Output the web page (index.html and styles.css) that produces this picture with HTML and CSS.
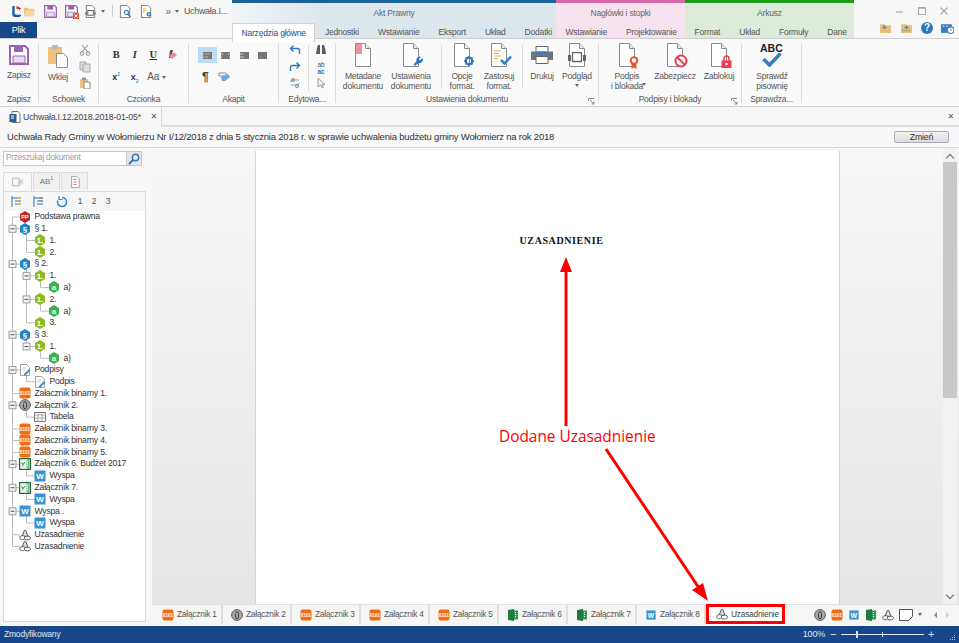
FILE: index.html
```html
<!DOCTYPE html>
<html lang="pl">
<head>
<meta charset="utf-8">
<title>Uchwała</title>
<link rel="stylesheet" href="styles.css">
</head>
<body>
<svg class="defs" width="0" height="0">
  <defs>
    <symbol id="s-save" viewBox="0 0 20 20"><path d="M1 1h15l3 3v15H1z" fill="#fff" stroke="#9b63b5" stroke-width="2"/><path d="M5 1h9v6H5z" fill="#9b63b5"/><path d="M4 11h12v7H4z" fill="#e9dcf0" stroke="#9b63b5"/></symbol>
    <symbol id="s-doc" viewBox="0 0 20 24"><path d="M2.500.5h10l5 5v18h-15z" fill="#fff" stroke="#8b8b8b"/><path d="M12.500.5v5h5" fill="#eee" stroke="#8b8b8b"/></symbol>
    <symbol id="s-folder" viewBox="0 0 14 12"><path d="M1 2h4l1 1h6v8H1z" fill="#edc27d"/><path d="M1 11l2-6h10l-2 6z" fill="#f4d59f"/></symbol>
    <symbol id="s-hex-pp" viewBox="0 0 12 12"><path d="M6 0l5 3v6l-5 3-5-3V3z" fill="#c9202f"/><text x="6" y="8.200" class="hex-t hex-s">PP</text></symbol>
    <symbol id="s-hex-par" viewBox="0 0 12 12"><path d="M6 0l5 3v6l-5 3-5-3V3z" fill="#1c86c8"/><text x="6" y="9" class="hex-t">§</text></symbol>
    <symbol id="s-hex-1" viewBox="0 0 12 12"><path d="M6 0l5 3v6l-5 3-5-3V3z" fill="#8dbd1d"/><text x="6" y="9" class="hex-t">1.</text></symbol>
    <symbol id="s-hex-a" viewBox="0 0 12 12"><path d="M6 0l5 3v6l-5 3-5-3V3z" fill="#37b34a"/><text x="6" y="9" class="hex-t">a</text></symbol>
    <symbol id="s-sign" viewBox="0 0 12 12"><path d="M1.500.5h6l3 3v8h-9z" fill="#fff" stroke="#8b8b8b" stroke-width=".8"/><path d="M3 4h4M3 6h3" stroke="#bbb" stroke-width=".7"/><path d="M5 10l5-5 1.500 1.500-5 5H5z" fill="#4a90d0"/></symbol>
    <symbol id="s-bin" viewBox="0 0 12 12"><rect x=".5" y=".5" width="11" height="11" rx="2" fill="#f36c12"/><text x="6" y="8" class="bin-t">0101</text></symbol>
    <symbol id="s-att" viewBox="0 0 12 12"><circle cx="6" cy="6" r="5.400" fill="#a8a8a8" stroke="#5e5e5e" stroke-width="1"/><path d="M4.500 4.300a1.500 1.500 0 0 1 3 0v3.800a1.500 1.500 0 0 1-3 0V5" fill="none" stroke="#333" stroke-width=".9"/></symbol>
    <symbol id="s-table" viewBox="0 0 12 12"><path d="M.5 1.500h11v9H.5z" fill="#fff" stroke="#777"/><path d="M.5 4h11M.5 7h11M4 1.500v9M8 1.500v9" stroke="#999" stroke-width=".8"/></symbol>
    <symbol id="s-xl" viewBox="0 0 12 12"><rect x=".6" y=".6" width="10.800" height="10.800" fill="#eef6ee" stroke="#1f6b36" stroke-width="1.200"/><path d="M7.500 1.200h3.300v9.600H7.500z" fill="#7fbb8f"/><path d="M8.500 3v6" stroke="#fff" stroke-dasharray="1 1"/><path d="M2.500 4.500l1.500 2 2-2.500" fill="none" stroke="#3f9a5c" stroke-width="1.100"/><path d="M2.500 8h3" stroke="#9cc9a8"/></symbol>
    <symbol id="s-word" viewBox="0 0 12 12"><rect x=".5" y=".5" width="11" height="11" fill="#3a93d2"/><text x="6" y="9" class="hex-t">W</text></symbol>
    <symbol id="s-uz" viewBox="0 0 12 12"><path d="M3 7.500 5.200 1.800c.4-.9 1.300-.9 1.700 0L9 7.500z" fill="#ddd" stroke="#444" stroke-width=".9"/><path d="M.8 8.500c0-1.200 1-1.800 2.400-1.800h1c1.300 0 2 .7 2 1.800 0 1.400-.9 2.200-2.700 2.200S.8 9.900.8 8.500z" fill="#fff" stroke="#444" stroke-width=".9"/><path d="M5.400 8.800c0-1 1-1.600 2.600-1.600h1.200c1.300 0 2.200.7 2.200 1.700 0 1.300-1 2-3 2s-3-.8-3-2.100z" fill="#fff" stroke="#444" stroke-width=".9"/></symbol>
    <symbol id="s-sheet" viewBox="0 0 12 12"><path d="M1 1l6-1v12l-6-1z" fill="#1f7a3c"/><path d="M7 1.500h4v9H7z" fill="#2f9a55"/><path d="M8.500 3v6" stroke="#fff" stroke-dasharray="1 1"/></symbol>
  </defs>
</svg>

<header class="titlebar">
  <div class="left-head">
    <div class="qat">
      <svg class="q q-logo" viewBox="0 0 13 14"><path d="M2 1v9a3 3 0 0 0 3 3h5l2-2.500H6a1.500 1.500 0 0 1-1.500-1.500V1z" fill="#155fa0"/><path d="M6.500 1l5 2.500L9.500 6 9 4.300 6.500 4z" fill="#d01f2f"/></svg>
      <svg class="q q-open"><use href="#s-folder"/></svg>
      <svg class="q q-save"><use href="#s-save"/></svg>
      <span class="q q-savex"><svg class="q-inner"><use href="#s-save"/></svg><svg class="mini-x" viewBox="0 0 6 6"><path d="M0 0h6v6H0z" fill="#e2553d"/><path d="M1.500 1.500l3 3m0-3l-3 3" stroke="#fff"/></svg></span>
      <svg class="q q-print" viewBox="0 0 14 14"><path d="M2.500.5h6l3 3v10h-9z" fill="#fff" stroke="#777"/><rect x="4" y="6" width="6" height="5" fill="none" stroke="#555"/><path d="M1 8h2v2H1zM11 8h2v2h-2z" fill="#777"/></svg>
      <span class="caret q-caret1"></span>
      <span class="q-sep"></span>
      <svg class="q q-dsearch" viewBox="0 0 14 14"><path d="M1.500.5h7l3 3v10h-10z" fill="#fff" stroke="#777"/><circle cx="8" cy="8" r="2.200" fill="none" stroke="#3779b6" stroke-width="1.200"/><path d="M9.500 10l3 3" stroke="#3779b6" stroke-width="1.500"/></svg>
      <svg class="q q-dgear" viewBox="0 0 14 14"><path d="M1.500.5h7l3 3v10h-10z" fill="#fff" stroke="#777"/><path d="M3 4h3M3 6h4M3 8h2" stroke="#e0a948"/><circle cx="9.500" cy="10" r="2.500" fill="#3d82bd"/><circle cx="9.500" cy="10" r=".9" fill="#fff"/></svg>
      <span class="q-more">»</span>
      <span class="caret q-caret2"></span>
      <span class="q-title">Uchwała.I...</span>
    </div>
    <div class="file-row"><div class="file-tab">Plik</div></div>
  </div>

  <div class="ctx ctx-blue">
    <div class="ctx-name">Akt Prawny</div>
    <div class="ctx-tabs">
      <span class="rtab rtab-active">Narzędzia główne</span>
      <span class="rtab">Jednostki</span><span class="rtab">Wstawianie</span><span class="rtab">Eksport</span><span class="rtab">Układ</span><span class="rtab">Dodatki</span>
    </div>
  </div>
  <div class="ctx ctx-pink">
    <div class="ctx-name">Nagłówki i stopki</div>
    <div class="ctx-tabs"><span class="rtab">Wstawianie</span><span class="rtab">Projektowanie</span></div>
  </div>
  <div class="ctx ctx-green">
    <div class="ctx-name">Arkusz</div>
    <div class="ctx-tabs"><span class="rtab">Format</span><span class="rtab">Układ</span><span class="rtab">Formuły</span><span class="rtab">Dane</span></div>
  </div>

  <div class="winside">
    <div class="winctl">
      <svg class="wc" viewBox="0 0 10 10"><path d="M1 6h7" stroke="#aaa" stroke-width="1.200"/></svg>
      <svg class="wc" viewBox="0 0 10 10"><path d="M1.500 1.500h7v7h-7z" fill="none" stroke="#aaa"/><path d="M1.500 2h7" stroke="#aaa" stroke-width="1.500"/></svg>
      <svg class="wc" viewBox="0 0 10 10"><path d="M1.500 1.500l7 7m0-7l-7 7" stroke="#aaa" stroke-width="1.200"/></svg>
    </div>
    <div class="winhelp">
      <svg class="wh" viewBox="0 0 12 11"><path d="M1 2h4l1 1h5v7H1z" fill="#e8bd7b"/><path d="M7 5H4l1.500-2M4 5l1.500 1.500" stroke="#5a7fa5" fill="none"/></svg>
      <svg class="wh" viewBox="0 0 12 11"><path d="M1 2h4l1 1h5v7H1z" fill="#e8bd7b"/><path d="M4 5h3L5.500 3M7 5 5.500 6.500" stroke="#5a7fa5" fill="none"/><path d="M2 8h8" stroke="#777" stroke-dasharray="1 1"/></svg>
      <span class="help">?</span>
      <svg class="wh" viewBox="0 0 12 11"><path d="M0 2h10v8H0z" fill="#3a7fbe"/><circle cx="9" cy="7.500" r="3" fill="#fff" stroke="#3a7fbe"/><path d="M9 6v1.500h1.200" stroke="#3a7fbe" fill="none" stroke-width=".7"/><path d="M2 4h1M5 4h1" stroke="#fff"/></svg>
    </div>
  </div>
</header>

<section class="ribbon">
  <div class="group g-zapisz">
    <div class="g-body">
      <div class="big w38"><svg class="ic-save"><use href="#s-save"/></svg><span class="big-t">Zapisz</span></div>
    </div>
    <div class="g-label">Zapisz</div>
  </div>
  <div class="group g-schowek">
    <div class="g-body">
      <div class="big w38 nudge-wklej">
        <svg class="ic-paste" viewBox="0 0 22 24"><path d="M1 3h14v17H1z" fill="#ecc27c"/><path d="M5 1h6v4H5z" fill="#b9b9b9"/><path d="M9.500 9.500h7l4 4v10h-11z" fill="#fff" stroke="#8b8b8b"/></svg>
        <span class="big-t">Wklej</span>
      </div>
      <div class="stack stack-clip">
        <svg class="st" viewBox="0 0 12 12"><path d="M3 1l6 7M9 1 3 8" stroke="#999" stroke-width="1.100"/><circle cx="3" cy="9.500" r="1.800" fill="none" stroke="#888"/><circle cx="9" cy="9.500" r="1.800" fill="none" stroke="#888"/></svg>
        <svg class="st" viewBox="0 0 12 12"><path d="M1 1h6v8H1z" fill="#ddd" stroke="#aaa"/><path d="M4 3h7v8H4z" fill="#ddd" stroke="#aaa"/></svg>
        <svg class="st" viewBox="0 0 12 12"><path d="M1 2h8v9H1z" fill="#ecc27c"/><path d="M3 .5h4v3H3z" fill="#999"/><path d="M5 5h6v7H5z" fill="#fff" stroke="#8b8b8b"/></svg>
      </div>
    </div>
    <div class="g-label">Schowek</div>
  </div>
  <div class="group g-czcionka">
    <div class="g-body g-grid">
      <div class="tool-row">
        <span class="tool t-b">B</span><span class="tool t-i">I</span><span class="tool t-u">U</span>
        <svg class="tool-svg" viewBox="0 0 12 12"><path d="M4 1h3l-2 8H3z" fill="#555"/><path d="M6 10 3 7l5-4 3 3z" fill="#ee8e99"/></svg>
      </div>
      <div class="tool-row">
        <span class="tool t-sm">x<sup class="sup">2</sup></span><span class="tool t-sm">x<sub class="sub">2</sub></span><span class="tool t-aa">Aa</span><span class="caret caret-aa"></span>
      </div>
    </div>
    <div class="g-label">Czcionka</div>
  </div>
  <div class="group g-akapit">
    <div class="g-body g-grid">
      <div class="tool-row tool-row-ak">
        <span class="al al-on"><svg class="al-i" viewBox="0 0 9 7"><path d="M0 0h9v7H0z" fill="#777"/><path d="M0 2h7M0 5h5" stroke="#ddd" stroke-width=".6"/></svg></span>
        <span class="al"><svg class="al-i" viewBox="0 0 9 7"><path d="M0 0h9v7H0z" fill="#777"/><path d="M0 2h2M7 2h2M0 5h1M8 5h1" stroke="#fff" stroke-width=".6"/></svg></span>
        <span class="al"><svg class="al-i" viewBox="0 0 9 7"><path d="M0 0h9v7H0z" fill="#777"/><path d="M0 2h3M0 5h4" stroke="#fff" stroke-width=".6"/></svg></span>
        <span class="al"><svg class="al-i" viewBox="0 0 9 7"><path d="M0 0h9v7H0z" fill="#777"/></svg></span>
      </div>
      <div class="tool-row tool-row-ak2">
        <span class="tool t-pil">¶</span>
        <svg class="tool-svg" viewBox="0 0 12 10"><path d="M1 1h7v3H1z" fill="none" stroke="#888"/><path d="M4 9 3 5l7-3 2 3-5 4z" fill="#69a9dd"/></svg>
      </div>
    </div>
    <div class="g-label">Akapit</div>
  </div>
  <div class="group g-edyt">
    <div class="g-body g-edyt-body">
      <div class="stack stack-ed">
        <svg class="st" viewBox="0 0 12 12"><path d="M10.500 10V6.500a2 2 0 0 0-2-2H2M4.500 1.500l-3 3 3 3" fill="none" stroke="#2e78bd" stroke-width="1.400"/></svg>
        <svg class="st" viewBox="0 0 12 12"><path d="M1.500 10V6.500a2 2 0 0 1 2-2H10M7.500 1.500l3 3-3 3" fill="none" stroke="#2e78bd" stroke-width="1.400"/></svg>
        <svg class="st" viewBox="0 0 12 12"><path d="M10 3H3L1.500 5M2 8h7l1.500-2" fill="none" stroke="#7fa9d0" stroke-width="1.200"/><circle cx="4" cy="3" r="1.500" fill="none" stroke="#888"/><circle cx="8" cy="9" r="1.500" fill="none" stroke="#888"/></svg>
      </div>
      <span class="vsep vsep-ed"></span>
      <div class="stack stack-ed2">
        <svg class="st" viewBox="0 0 12 12"><path d="M1 10l1-6 1-3h2v9zM7 10V1h2l1 3 1 6z" fill="#5c5c5c"/></svg>
        <span class="abac"><span class="abac-a">ab</span><span class="abac-b">ac</span></span>
        <svg class="st" viewBox="0 0 12 12"><path d="M3 1v9l2.500-2 1.500 3 1.500-.8L7 7.500h3z" fill="#eef1f5" stroke="#9a9a9a"/></svg>
      </div>
    </div>
    <div class="g-label">Edytowa...</div>
  </div>
  <div class="group g-ustaw">
    <div class="g-body">
      <div class="big w48">
        <span class="ic-doc"><svg class="ic-doc-s"><use href="#s-doc"/></svg><svg class="ov ov-bm" viewBox="0 0 6 10"><path d="M0 0h6v10H0z" fill="#ef8fa0"/></svg></span>
        <span class="big-t">Metadane<br>dokumentu</span>
      </div>
      <div class="big w48">
        <span class="ic-doc"><svg class="ic-doc-s"><use href="#s-doc"/></svg><svg class="ov ov-br" viewBox="0 0 10 10"><path d="M9.500 2 7 4.500 5.500 3 8 .7A3.500 3.500 0 0 0 3.500 5L.5 8.500 2 10l3.500-3A3.500 3.500 0 0 0 9.500 2z" fill="#2a76b8"/></svg></span>
        <span class="big-t">Ustawienia<br>dokumentu</span>
      </div>
      <span class="vsep vsep-1"></span>
      <div class="big w40">
        <span class="ic-doc"><svg class="ic-doc-s"><use href="#s-doc"/></svg><svg class="ov ov-br" viewBox="0 0 10 10"><circle cx="5" cy="5" r="3.300" fill="none" stroke="#2a76b8" stroke-width="2.200"/><path d="M5 0v2M5 8v2M0 5h2M8 5h2M1.500 1.500l1.500 1.500M7 7l1.500 1.500M1.500 8.500 3 7M7 3l1.500-1.500" stroke="#2a76b8" stroke-width="1.500"/></svg></span>
        <span class="big-t">Opcje<br>format.</span>
      </div>
      <div class="big w34">
        <span class="ic-doc"><svg class="ic-doc-s"><use href="#s-doc"/></svg><svg class="ov ov-lines" viewBox="0 0 10 10"><path d="M0 1h7M0 3.500h5M0 6h7M0 8.500h4" stroke="#e6ad4b"/></svg><svg class="ov ov-chk" viewBox="0 0 12 10"><path d="M1 5l3.500 3.500L11 1.500" fill="none" stroke="#3a7fbe" stroke-width="2.500"/></svg></span>
        <span class="big-t">Zastosuj<br>format.</span>
      </div>
      <span class="vsep vsep-2"></span>
      <div class="big w32">
        <svg class="ic-print" viewBox="0 0 22 18"><path d="M5 .5h12v6H5z" fill="#fff" stroke="#666"/><path d="M0 5.500h22V14H0z" fill="#6d7681"/><path d="M6 5.500h10v1.800H6z" fill="#2a82cc"/><path d="M5 10.500h12v7H5z" fill="#fff" stroke="#666"/></svg>
        <span class="big-t">Drukuj</span>
      </div>
      <div class="big w38">
        <span class="ic-doc"><svg class="ic-doc-s"><use href="#s-doc"/></svg><svg class="ov ov-pv" viewBox="0 0 18 12"><path d="M4.500.5h9v9h-9z" fill="#fff" stroke="#666" stroke-width="1.300"/><path d="M0 3h3v6H0zM15 3h3v6h-3z" fill="#666"/></svg></span>
        <span class="big-t">Podgląd<br><span class="caret caret-big"></span></span>
      </div>
    </div>
    <div class="g-label">Ustawienia dokumentu</div>
    <svg class="launcher" viewBox="0 0 7 7"><path d="M.5 3V.5H6M2 2l4 4M6 3.500V6H3.500" fill="none" stroke="#888"/></svg>
  </div>
  <div class="group g-podpisy">
    <div class="g-body">
      <div class="big w52 caret-side">
        <span class="ic-doc"><svg class="ic-doc-s"><use href="#s-doc"/></svg><svg class="ov ov-seal" viewBox="0 0 10 13"><circle cx="5" cy="4.500" r="3.300" fill="#fff" stroke="#e4572e" stroke-width="2"/><path d="M2.500 7v6l2.500-1.500L7.500 13V7z" fill="#e4572e"/></svg></span>
        <span class="big-t">Podpis<br>i blokada</span>
        <span class="caret caret-podpis"></span>
      </div>
      <div class="big w44">
        <span class="ic-doc"><svg class="ic-doc-s"><use href="#s-doc"/></svg><svg class="ov ov-no" viewBox="0 0 14 14"><circle cx="7" cy="7" r="5.500" fill="#fff" stroke="#ef3b4f" stroke-width="2"/><path d="M3 3l8 8" stroke="#ef3b4f" stroke-width="2"/></svg></span>
        <span class="big-t">Zabezpiecz</span>
      </div>
      <div class="big w44">
        <span class="ic-doc"><svg class="ic-doc-s"><use href="#s-doc"/></svg><svg class="ov ov-lock" viewBox="0 0 11 13"><path d="M3 6V3.500a2.500 2.500 0 0 1 5 0V6" fill="none" stroke="#ef3b4f" stroke-width="1.500"/><path d="M.5 5.500h10V13H.5z" fill="#ef3b4f"/><circle cx="5.500" cy="9" r="1.300" fill="#fff"/></svg></span>
        <span class="big-t">Zablokuj</span>
      </div>
    </div>
    <div class="g-label">Podpisy i blokady</div>
    <svg class="launcher" viewBox="0 0 7 7"><path d="M.5 3V.5H6M2 2l4 4M6 3.500V6H3.500" fill="none" stroke="#888"/></svg>
  </div>
  <div class="group g-spraw">
    <div class="g-body">
      <div class="big w60">
        <span class="ic-abc"><span class="abc">ABC</span><svg class="abc-chk" viewBox="0 0 20 15"><path d="M1.500 7l6 6L18.500 1.500" fill="none" stroke="#3a7fbe" stroke-width="3.600"/></svg></span>
        <span class="big-t">Sprawdź<br>pisownię</span>
      </div>
    </div>
    <div class="g-label">Sprawdza...</div>
  </div>
</section>

<div class="doctabs">
  <div class="doctab">
    <svg class="doctab-i" viewBox="0 0 12 12"><path d="M3 .5h6l2 2v9H3z" fill="#fff" stroke="#777"/><path d="M.5 3h7v8h-7z" fill="#2c5d9f"/><path d="M2 5h3M2 7h3" stroke="#fff"/></svg>
    <span class="doctab-t">Uchwała.I.12.2018.2018-01-05*</span>
    <span class="x">✕</span>
  </div>
  <span class="x x-right">✕</span>
</div>

<div class="docinfo">
  <span class="docinfo-t">Uchwała Rady Gminy w Wołomierzu Nr I/12/2018 z dnia 5 stycznia 2018 r. w sprawie uchwalenia budżetu gminy Wołomierz na rok 2018</span>
  <span class="btn-change">Zmień</span>
</div>

<div class="workspace">
  <aside class="side">
    <div class="search">
      <span class="search-input">Przeszukaj dokument</span>
      <span class="search-btn"><svg class="search-i" viewBox="0 0 12 12"><circle cx="7.500" cy="4.500" r="3.200" fill="#dcecf8" stroke="#2a76b8" stroke-width="1.400"/><path d="M5 7l-4 4" stroke="#2a76b8" stroke-width="1.800"/></svg></span>
    </div>
    <div class="ptabs">
      <span class="ptab ptab-on"><svg class="ptab-i" viewBox="0 0 14 12"><path d="M.5 1.500h8v9h-8z" fill="#f5f5f5" stroke="#aaa"/><path d="M9 3h4v6H9z" fill="#ddd"/><path d="M8 4l2.500 2L8 8" fill="#bbb"/></svg></span>
      <span class="ptab"><span class="ab">AB<sup class="ab-s">1</sup></span></span>
      <span class="ptab"><svg class="ptab-i" viewBox="0 0 14 14"><path d="M3 .5h6l3 3v10H3z" fill="#fff" stroke="#999"/><path d="M5 4h4M5 7h4M5 10h4" stroke="#d06070"/></svg></span>
    </div>
    <div class="panel">
      <div class="ptools">
        <svg class="pt pt1" viewBox="0 0 11 11"><path d="M1 0v11M1 2h9M4 5h6M4 8h6" stroke="#2a76b8"/><path d="M6 1h4v2H6zM6 7h4v2H6z" fill="#e8b64c"/></svg>
        <svg class="pt pt2" viewBox="0 0 11 11"><path d="M1 0v11M1 2h9M4 5h6M4 8h6" stroke="#2a76b8"/><path d="M6 1h4v2H6zM6 4h4v2H6z" fill="#999"/></svg>
        <svg class="pt pt3" viewBox="0 0 12 12"><path d="M6 1.500A4.500 4.500 0 1 1 1.800 4.500" fill="none" stroke="#2a82cc" stroke-width="1.500"/><path d="M3 0v3.500h3.500" fill="none" stroke="#2a82cc" stroke-width="1.200"/></svg>
        <span class="pn pn1">1</span><span class="pn">2</span><span class="pn">3</span>
      </div>
      <div class="tree">
        <svg class="tree-lines" viewBox="0 0 142 400">
          <path class="tl" d="M8.500 6V335.600M8.500 6H16M8.500 182.600H16M8.500 217.900H16M8.500 229.600H16M8.500 241.400H16M8.500 323.800H16M8.500 335.600H16
            M8.500 17.800H16M8.500 53.100H16M8.500 123.700H16M8.500 159H16M8.500 194.300H16M8.500 253.200H16M8.500 276.700H16M8.500 300.300H16
            M22.500 17.800V41.300M22.500 29.500H31M22.500 41.300H31
            M22.500 53.100V111.900M22.500 64.900H31M22.500 88.400H31M22.500 111.900H31
            M36.500 64.900V76.600H46M36.500 88.400V100.200H46
            M22.500 123.700V135.500H31M36.500 135.500V147.200H46
            M22.500 159V170.800H31M22.500 194.300V206.100H31M22.500 253.200V264.900H31M22.500 276.700V288.500H31M22.500 300.300V312H31"/>
          <g class="exp">
            <path d="M5 14.300h7v7H5zM5 49.600h7v7H5zM5 120.200h7v7H5zM5 155.500h7v7H5zM5 190.800h7v7H5zM5 249.700h7v7H5zM5 273.200h7v7H5zM5 296.800h7v7H5zM19 61.400h7v7h-7zM19 84.900h7v7h-7zM19 132h7v7h-7z"/>
          </g>
          <path class="exp-m" d="M6.500 17.800h4M6.500 53.100h4M6.500 123.700h4M6.500 159h4M6.500 194.300h4M6.500 253.200h4M6.500 276.700h4M6.500 300.300h4M20.500 64.900h4M20.500 88.400h4M20.500 135.500h4"/>
        </svg>
        <div class="row l0"><svg class="ti"><use href="#s-hex-pp"/></svg>Podstawa prawna</div>
        <div class="row l0"><svg class="ti"><use href="#s-hex-par"/></svg>§ 1.</div>
        <div class="row l1"><svg class="ti"><use href="#s-hex-1"/></svg>1.</div>
        <div class="row l1"><svg class="ti"><use href="#s-hex-1"/></svg>2.</div>
        <div class="row l0"><svg class="ti"><use href="#s-hex-par"/></svg>§ 2.</div>
        <div class="row l1"><svg class="ti"><use href="#s-hex-1"/></svg>1.</div>
        <div class="row l2"><svg class="ti"><use href="#s-hex-a"/></svg>a)</div>
        <div class="row l1"><svg class="ti"><use href="#s-hex-1"/></svg>2.</div>
        <div class="row l2"><svg class="ti"><use href="#s-hex-a"/></svg>a)</div>
        <div class="row l1"><svg class="ti"><use href="#s-hex-1"/></svg>3.</div>
        <div class="row l0"><svg class="ti"><use href="#s-hex-par"/></svg>§ 3.</div>
        <div class="row l1"><svg class="ti"><use href="#s-hex-1"/></svg>1.</div>
        <div class="row l2"><svg class="ti"><use href="#s-hex-a"/></svg>a)</div>
        <div class="row l0"><svg class="ti"><use href="#s-sign"/></svg>Podpisy</div>
        <div class="row l1"><svg class="ti"><use href="#s-sign"/></svg>Podpis</div>
        <div class="row l0"><svg class="ti"><use href="#s-bin"/></svg>Załacznik binarny 1.</div>
        <div class="row l0"><svg class="ti"><use href="#s-att"/></svg>Załącznik 2.</div>
        <div class="row l1"><svg class="ti"><use href="#s-table"/></svg>Tabela</div>
        <div class="row l0"><svg class="ti"><use href="#s-bin"/></svg>Załacznik binarny 3.</div>
        <div class="row l0"><svg class="ti"><use href="#s-bin"/></svg>Załacznik binarny 4.</div>
        <div class="row l0"><svg class="ti"><use href="#s-bin"/></svg>Załacznik binarny 5.</div>
        <div class="row l0"><svg class="ti"><use href="#s-xl"/></svg>Załącznik 6. Budżet 2017</div>
        <div class="row l1"><svg class="ti"><use href="#s-word"/></svg>Wyspa</div>
        <div class="row l0"><svg class="ti"><use href="#s-xl"/></svg>Załącznik 7.</div>
        <div class="row l1"><svg class="ti"><use href="#s-word"/></svg>Wyspa</div>
        <div class="row l0"><svg class="ti"><use href="#s-word"/></svg>Wyspa .</div>
        <div class="row l1"><svg class="ti"><use href="#s-word"/></svg>Wyspa</div>
        <div class="row l0"><svg class="ti"><use href="#s-uz"/></svg>Uzasadnienie</div>
        <div class="row l0"><svg class="ti"><use href="#s-uz"/></svg>Uzasadnienie</div>
      </div>
    </div>
  </aside>

  <main class="main">
    <div class="doc-area">
      <div class="canvas">
        <div class="page"><h1 class="page-h">UZASADNIENIE</h1></div>
      </div>
      <div class="vscroll">
        <span class="chev chev-up"></span>
        <span class="thumb"></span>
        <span class="chev chev-down"></span>
      </div>
    </div>
    <div class="sheets">
      <span class="sheet"><svg class="si"><use href="#s-bin"/></svg>Załącznik 1</span>
      <span class="sheet"><svg class="si"><use href="#s-att"/></svg>Załącznik 2</span>
      <span class="sheet"><svg class="si"><use href="#s-bin"/></svg>Załącznik 3</span>
      <span class="sheet"><svg class="si"><use href="#s-bin"/></svg>Załącznik 4</span>
      <span class="sheet"><svg class="si"><use href="#s-bin"/></svg>Załącznik 5</span>
      <span class="sheet"><svg class="si"><use href="#s-sheet"/></svg>Załącznik 6</span>
      <span class="sheet"><svg class="si"><use href="#s-sheet"/></svg>Załącznik 7</span>
      <span class="sheet"><svg class="si si-w"><use href="#s-word"/></svg>Załącznik 8</span>
      <span class="sheet sheet-on"><svg class="si"><use href="#s-uz"/></svg>Uzasadnienie</span>
      <div class="sheet-tools">
        <svg class="si"><use href="#s-att"/></svg>
        <svg class="si"><use href="#s-bin"/></svg>
        <svg class="si si-w"><use href="#s-word"/></svg>
        <svg class="si"><use href="#s-sheet"/></svg>
        <svg class="si"><use href="#s-uz"/></svg>
        <svg class="si si-note" viewBox="0 0 14 12"><path d="M.5.500h13v7l-4 4h-9z" fill="#fff" stroke="#555"/></svg>
        <span class="caret caret-s"></span>
        <span class="tri tri-l"></span>
        <span class="tri tri-r"></span>
      </div>
    </div>
  </main>
</div>

<footer class="status">
  <span class="status-t">Zmodyfikowany</span>
  <div class="zoom">
    <span class="zoom-v">100%</span>
    <span class="zoom-b">−</span>
    <span class="slider"><span class="slider-thumb"></span><span class="slider-tick"></span></span>
    <span class="zoom-b">+</span>
    <svg class="grip" viewBox="0 0 6 6"><path d="M4 0h1v1H4zM2 2h1v1H2zM4 2h1v1H4zM0 4h1v1H0zM2 4h1v1H2zM4 4h1v1H4z" fill="#a9c1de"/></svg>
  </div>
</footer>

<div class="annot-label">Dodane Uzasadnienie</div>
<svg class="annot" viewBox="0 0 959 643">
  <path d="M566 426V268" stroke="#ff0000" stroke-width="3"/>
  <path d="M566 257l-6 15h12z" fill="#ff0000"/>
  <path d="M606 449 699 588" stroke="#ff0000" stroke-width="3"/>
  <path d="M708 601 692 590 703 583z" fill="#ff0000"/>
</svg>
</body>
</html>
```

FILE: styles.css
```css
* { box-sizing: border-box; }
html, body { margin: 0; padding: 0; }
body {
  width: 959px; height: 643px; overflow: hidden; position: relative;
  display: flex; flex-direction: column;
  font: 8.500px/11px "Liberation Sans", Arial, sans-serif; letter-spacing: -.2px; color: #444; background: #f5f5f5;
}
svg { display: block; flex: none; }
.defs { position: absolute; }
.hex-t { font: bold 8px "Liberation Sans", sans-serif; fill: #fff; text-anchor: middle; letter-spacing: 0; }
.hex-s { font-size: 5.500px; }
.bin-t { font: bold 4.500px "Liberation Sans", sans-serif; fill: #fff; text-anchor: middle; letter-spacing: 0; }

/* title bar */
.titlebar { display: flex; height: 39px; flex: none; background: #f7f7f7; border-bottom: 1px solid #cfcfcf; }
.left-head { width: 232px; flex: none; display: flex; flex-direction: column; }
.qat { height: 23px; display: flex; align-items: center; padding-left: 10px; }
.q { width: 13px; height: 13px; flex: none; }
.q-open { margin-right: 7.500px; }
.q-save { margin-right: 8px; }
.q-savex { position: relative; margin-right: 6px; }
.q-inner { width: 13px; height: 13px; }
.mini-x { position: absolute; right: -1px; bottom: -1px; width: 6px; height: 6px; }
.q-print { margin-right: 4.500px; }
.caret { display: inline-block; width: 0; height: 0; border: 2px solid transparent; border-top: 3px solid #666; border-bottom: 0; flex: none; }
.q-caret1 { margin-right: 7px; }
.q-sep { width: 1px; height: 12px; background: #ccc; margin-right: 5.500px; }
.q-dsearch { margin-right: 8px; }
.q-dgear { margin-right: 13px; }
.q-more { font-size: 10px; margin-right: 4px; color: #666; }
.q-caret2 { margin-right: 5px; }
.q-title { white-space: nowrap; color: #555; font-size: 8.800px; }
.file-row { flex: 1; display: flex; }
.file-tab { width: 37px; background: #17488a; color: #fff; text-align: center; line-height: 16px; font-size: 9px; }

.ctx { display: flex; flex-direction: column; border-top: 3px solid; flex: none; }
.ctx-name { height: 20px; line-height: 21px; text-align: center; color: #666; }
.ctx-tabs { flex: 1; display: flex; }
.ctx-blue { width: 324px; border-color: #1a6495; background: linear-gradient(90deg, #f0f4f7, #dce6ed 30%); }
.ctx-pink { width: 129px; border-color: #d66aa9; background: #f7e3ef; }
.ctx-green { width: 169px; border-color: #1b9a1c; background: #dcecd9; }
.rtab { padding: 0 9.500px; line-height: 18px; color: #555; white-space: nowrap; }
.rtab-active { background: #fff; color: #1d4f91; border: 1px solid #d4d4d4; border-bottom: 0; padding: 0 8.500px; margin-bottom: -1px; position: relative; }

.winside { flex: 1; display: flex; flex-direction: column; background: #f7f7f7; }
.winctl { height: 22px; display: flex; justify-content: flex-end; align-items: center; gap: 12px; padding-right: 10px; }
.wc { width: 10px; height: 10px; }
.winhelp { display: flex; justify-content: flex-end; align-items: center; gap: 8px; padding-right: 5px; }
.wh { width: 13px; height: 12px; }
.help { width: 12px; height: 12px; border-radius: 50%; background: #2a76b8; color: #fff; font: bold 10px/12px "Liberation Sans", sans-serif; text-align: center; }

/* ribbon */
.ribbon { height: 68px; flex: none; display: flex; background: #fafafa; padding: 4px 0 3px; border-bottom: 1px solid #cfcfcf; }
.group { display: flex; flex-direction: column; border-right: 1px solid #dcdcdc; position: relative; flex: none; }
.g-zapisz { width: 39px; }
.g-schowek { width: 60px; }
.g-czcionka { width: 90px; }
.g-akapit { width: 90px; }
.g-edyt { width: 57px; }
.g-ustaw { width: 263px; }
.g-podpisy { width: 143px; }
.g-spraw { width: 60px; }
.g-body { flex: 1; display: flex; min-height: 0; }
.g-label { height: 12px; line-height: 11px; margin-bottom: -3px; text-align: center; color: #555; white-space: nowrap; }
.big { display: flex; flex-direction: column; align-items: center; flex: none; position: relative; }
.big-t { margin-top: 4px; text-align: center; line-height: 10px; white-space: nowrap; color: #555; display: block; }
.w32 { width: 32px; } .w34 { width: 34px; } .w38 { width: 38px; } .w40 { width: 40px; }
.w44 { width: 44px; } .w48 { width: 48px; } .w52 { width: 52px; } .w60 { width: 60px; }
.ic-save { width: 20px; height: 20px; margin-top: 2px; margin-bottom: 1px; }
.ic-paste { width: 22px; height: 24px; }
.ic-doc { position: relative; width: 20px; height: 24px; display: block; flex: none; }
.ic-doc-s { width: 20px; height: 24px; }
.ov { position: absolute; }
.ov-bm { left: 3px; top: 1px; width: 6px; height: 10px; }
.ov-br { right: -2px; bottom: 1px; width: 10px; height: 10px; }
.ov-lines { left: 5px; top: 7px; width: 10px; height: 10px; }
.ov-chk { right: -3px; bottom: 2px; width: 12px; height: 10px; }
.ov-pv { left: 1px; top: 9px; width: 18px; height: 12px; }
.ov-seal { right: -2px; bottom: -2px; width: 10px; height: 13px; }
.ov-no { right: -3px; bottom: -1px; width: 14px; height: 14px; }
.ov-lock { right: -3px; bottom: -1px; width: 11px; height: 13px; }
.ic-print { width: 22px; height: 18px; margin: 3px 0 3px; }
.caret-big { vertical-align: 2px; }
.caret-podpis { position: absolute; right: 7px; top: 40px; }
.launcher { position: absolute; right: 3px; bottom: -2px; width: 7px; height: 7px; }

.nudge-wklej { padding-top: 1px; }
.stack { display: flex; flex-direction: column; align-items: center; }
.st { width: 12px; height: 12px; margin-bottom: 4.500px; }
.stack-clip { width: 16px; padding-top: 1px; }
.g-grid { flex-direction: column; }
.tool-row { display: flex; align-items: center; height: 16px; padding-left: 8px; margin-top: 4px; }
.tool-row + .tool-row { margin-top: 6px; }
.tool { width: 18.500px; text-align: center; color: #333; font: bold 10px/12px "Liberation Serif", serif; letter-spacing: 0; }
.t-b { font: bold 10.500px/12px "Liberation Serif", serif; }
.t-i { font: italic bold 10.500px/12px "Liberation Serif", serif; }
.t-u { font: bold 10.500px/12px "Liberation Serif", serif; text-decoration: underline; }
.t-sm { font: bold 9px/12px "Liberation Sans", sans-serif; }
.t-aa { font: 10px/12px "Liberation Sans", sans-serif; color: #555; }
.caret-aa { margin-left: -1px; }
.sup, .sub { font-size: 5px; color: #4a90d0; line-height: 0; }
.tool-svg { width: 12px; height: 12px; margin-left: 3px; }
.tool-row-ak { padding-left: 9px; }
.al { width: 18.500px; height: 16px; display: flex; align-items: center; justify-content: center; flex: none; }
.al-on { background: #bddcf3; }
.al-i { width: 9px; height: 7px; }
.tool-row-ak2 { padding-left: 7px; }
.t-pil { font: bold 12px/12px "Liberation Sans", sans-serif; color: #444; }
.g-edyt-body { align-items: flex-start; }
.stack-ed { width: 29px; padding: 1px 0 0 3px; }
.stack-ed2 { width: 24px; padding-top: 1px; }
.vsep-ed { height: 46px; margin-top: 2px; }
.vsep { width: 1px; background: #dcdcdc; flex: none; }
.abac { display: flex; flex-direction: column; align-items: center; width: 14px; height: 14px; margin-bottom: 2.500px; font-size: 6.500px; line-height: 7px; letter-spacing: 0; color: #555; }
.abac-b { color: #2a76b8; font-weight: bold; }
.g-ustaw .g-body { padding-left: 3px; }
.vsep-1 { height: 44px; margin: 2px 0 0 6px; }
.vsep-2 { height: 44px; margin: 2px 3px 0 6px; }
.g-podpisy .g-body { padding-left: 2px; }
.ic-abc { position: relative; width: 22px; height: 24px; display: block; flex: none; }
.abc { position: absolute; left: -1px; top: -1px; font: bold 10.500px/12px "Liberation Sans", sans-serif; letter-spacing: 0; color: #222; }
.abc-chk { position: absolute; left: 1px; top: 9px; width: 20px; height: 15px; }

/* document tabs */
.doctabs { height: 20px; flex: none; display: flex; justify-content: space-between; align-items: flex-end; background: #f5f5f5; border-bottom: 2px solid #dcdcdc; padding-top: 1px; }
.doctab { width: 162px; height: 20px; margin-bottom: -2px; background: #f8f8f8; border: 1px solid #d5d5d5; border-width: 0 1px 0 0; display: flex; align-items: center; padding-left: 9px; }
.doctab-i { width: 12px; height: 12px; margin-right: 2px; }
.doctab-t { white-space: nowrap; color: #444; font-size: 8.800px; }
.x { font: 8px/10px "DejaVu Sans", sans-serif; color: #555; }
.doctab .x { margin-left: auto; margin-right: 4px; }
.x-right { margin-right: 5px; margin-bottom: 3px; }
.docinfo { height: 21px; flex: none; display: flex; justify-content: space-between; align-items: center; background: #f8f8f8; padding: 0 10px 1px 7px; border-bottom: 1px solid #d8d8d8; }
.docinfo-t { white-space: nowrap; color: #333; font-size: 9.500px; }
.btn-change { width: 55px; height: 12px; border: 1px solid #aab; border-radius: 2px; background: linear-gradient(#f2f2f4, #dcdde2); text-align: center; line-height: 10px; color: #333; font-size: 8.800px; }

/* workspace */
.workspace { height: 476px; flex: none; display: flex; }
.side { width: 152px; flex: none; background: #f7f7f7; padding: 3px 6px 2px 3px; display: flex; flex-direction: column; }
.search { height: 15px; display: flex; flex: none; }
.search-input { width: 124px; background: #fff; border: 1px solid #c8c8c8; color: #999; padding-left: 2px; line-height: 12px; font-size: 8.200px; }
.search-btn { width: 15px; background: #e6e6e6; border: 1px solid #c8c8c8; border-left: 0; display: flex; align-items: center; justify-content: center; }
.search-i { width: 12px; height: 12px; }
.ptabs { display: flex; margin-top: 6px; height: 19px; flex: none; gap: 1px; }
.ptab { width: 27px; height: 18px; border: 1px solid #dadada; border-bottom: 0; background: #f0f0f0; display: flex; align-items: center; justify-content: center; }
.ptab-on { width: 29px; height: 19px; background: #f7f7f7; margin-bottom: -1px; position: relative; z-index: 1; }
.ptab-i { width: 12px; height: 12px; }
.ab { font-size: 8px; color: #777; letter-spacing: 0; }
.ab-s { color: #d33; font-size: 5px; line-height: 0; }
.panel { flex: 1; min-height: 0; border: 1px solid #dadada; background: #fff; display: flex; flex-direction: column; }
.ptools { height: 19px; flex: none; background: #f6f6f6; display: flex; align-items: center; }
.pt { width: 11px; height: 11px; }
.pt1 { margin-left: 7px; }
.pt2 { margin-left: 11px; }
.pt3 { margin-left: 12px; width: 12px; height: 12px; }
.pn { width: 14px; text-align: center; color: #555; }
.pn1 { margin-left: 5px; }
.tree { position: relative; flex: 1; color: #333; font-size: 8.600px; }
.tree-lines { position: absolute; left: 0; top: 0; width: 142px; height: 400px; }
.tl { fill: none; stroke: #bdbdbd; stroke-width: 1; }
.exp path { fill: #f2f2f2; stroke: #9c9c9c; stroke-width: 1; }
.exp-m { stroke: #555; stroke-width: 1; }
.row { display: flex; align-items: center; height: 11.770px; white-space: nowrap; position: relative; }
.ti { width: 12px; height: 12px; margin-right: 3.500px; flex: none; }
.l0 { padding-left: 15px; }
.l1 { padding-left: 30px; }
.l2 { padding-left: 44px; }

/* main */
.main { flex: 1; min-width: 0; display: flex; flex-direction: column; }
.doc-area { flex: 1; min-height: 0; display: flex; background: linear-gradient(#f6f6f6, #e6e6e6); padding-right: 2px; }
.canvas { flex: 1; display: flex; justify-content: center; padding-top: 3px; min-height: 0; overflow: hidden; }
.page { width: 585px; background: #fff; border: solid #d4d4d4; border-width: 0 1px; padding: 84px 0 0 28px; }
.page-h { margin: 0; text-align: center; font: bold 10px/12px "Liberation Serif", serif; color: #111; letter-spacing: .6px; }
.vscroll { width: 14px; flex: none; display: flex; flex-direction: column; align-items: center; background: #f1f1f1; }
.chev { width: 6px; height: 6px; border: solid #666; border-width: 1.500px 0 0 1.500px; flex: none; }
.chev-up { transform: rotate(45deg); margin-top: 7px; }
.thumb { width: 14px; height: 236px; background: #c8c8c8; margin-top: 1px; }
.chev-down { transform: rotate(225deg); margin-top: auto; margin-bottom: 6px; }
.sheets { height: 20px; flex: none; display: flex; align-items: stretch; padding-left: 2px; background: #f5f5f5; border-top: 1px solid #e0e0e0; }
.sheet { width: 69px; display: flex; align-items: center; padding-left: 8px; border-right: 2px solid #dedede; white-space: nowrap; flex: none; color: #555; font-size: 8.300px; }
.si { width: 12px; height: 12px; margin-right: 3px; flex: none; }
.si-w { width: 10px; height: 10px; margin-left: 1px; margin-right: 4px; }
.sheet-on { width: 79px; border: 3px solid #f00; padding-left: 7px; margin-top: -1px; background: #fff; color: #444; }
.sheet-tools { flex: 1; display: flex; align-items: center; padding-left: 29px; gap: 5px; }
.sheet-tools .si { margin-right: 0; }
.sheet-tools .si-w { margin: 0 1px; }
.si-note { width: 14px; height: 12px; }
.tri { width: 0; height: 0; border: 3px solid transparent; flex: none; }
.tri-l { border-right-color: #888; border-left: 0; margin-left: 7px; }
.tri-r { border-left-color: #ccc; border-right: 0; margin-left: 4px; }

/* status */
.status { margin-top: 2px; height: 17px; flex: none; background: #17478a; color: #dfe8f4; display: flex; justify-content: space-between; align-items: center; padding-left: 4px; }
.zoom { display: flex; align-items: center; }
.zoom-v { margin-right: 3px; font-size: 9px; }
.zoom-b { font-size: 11px; width: 10px; text-align: center; }
.slider { width: 83px; height: 1px; background: #dfe8f4; margin: 0 2px 0 3px; position: relative; }
.slider-thumb { position: absolute; left: 15px; top: -3px; width: 2px; height: 7px; background: #dfe8f4; }
.slider-tick { position: absolute; left: 41px; top: -2px; width: 1px; height: 5px; background: #dfe8f4; }
.grip { width: 6px; height: 6px; margin: 6px 3px 0 14px; }

/* annotation */
.annot { position: absolute; left: 0; top: 0; width: 959px; height: 643px; pointer-events: none; }
.annot-label { position: absolute; left: 499px; top: 427px; font: 15.400px/20px "Open Sans", sans-serif; letter-spacing: 0; color: #f00; white-space: nowrap; z-index: 2; }
```
